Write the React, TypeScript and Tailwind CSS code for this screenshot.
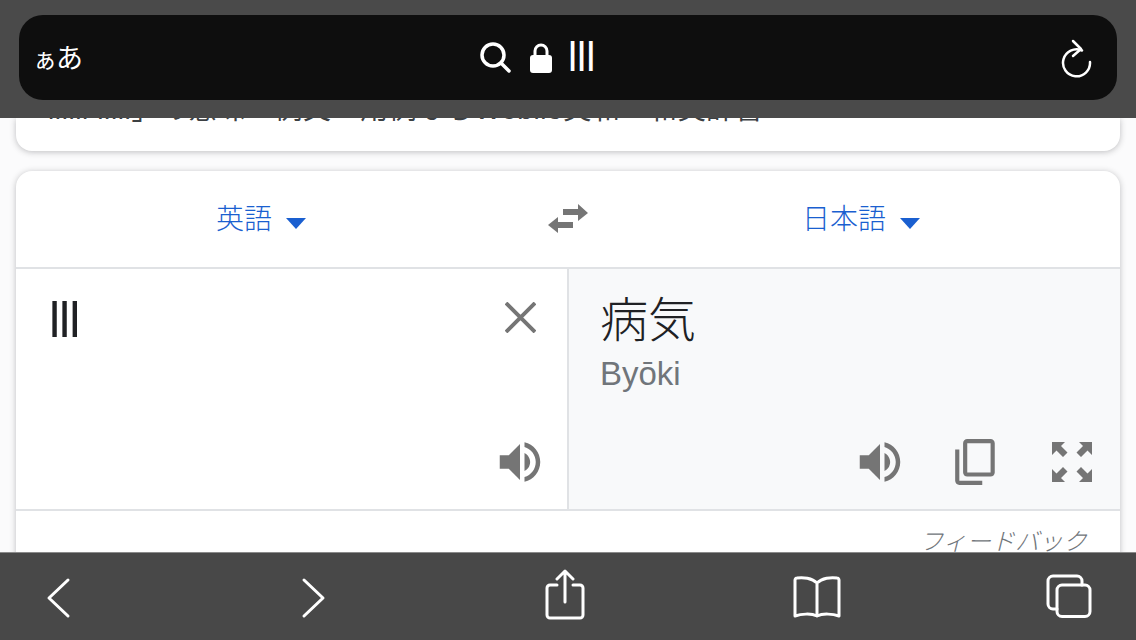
const JP = "font-['Liberation_Sans','Noto_Sans_CJK_JP',sans-serif]";

function Speaker() {
  return (
    <svg viewBox="0 0 24 24" className="h-[54px] w-[54px] fill-[#757575]">
      <path d="M3 9v6h4l5 5V4L7 9H3zm13.5 3c0-1.77-1.02-3.29-2.5-4.03v8.05c1.48-.73 2.5-2.25 2.5-4.02zM14 3.23v2.06c2.89.86 5 3.54 5 6.71s-2.11 5.85-5 6.71v2.06c4.01-.91 7-4.49 7-8.77s-2.99-7.86-7-8.77z" />
    </svg>
  );
}

function Caret() {
  return <span className="ml-[14px] mt-[6px] h-0 w-0 border-x-[10px] border-t-[11px] border-x-transparent border-t-[#1a5fd0]" />;
}

export default function App() {
  return (
    <div className={`flex h-[640px] w-[1136px] flex-col overflow-hidden bg-[#fbfbfc] ${JP}`}>
      {/* Safari top bar */}
      <div className="z-10 h-[118px] shrink-0 bg-[#4a4a4a] px-[19px] pt-[15px]">
        <div className="flex h-[85px] w-[1098px] items-center rounded-[24px] bg-[#0e0e0e] pl-[18px] pr-[25px] text-white">
          <span className="-ml-[3px] mt-[3px] w-[47px] whitespace-nowrap text-[27px] leading-none">
            <span className="-ml-[1px] -mr-[1px] text-[24px]">ぁ</span>あ
          </span>
          <svg viewBox="0 0 32 32" className="ml-[398px] h-8 w-8 fill-none stroke-white stroke-[3.5]">
            <circle cx="14" cy="13" r="11" />
            <path d="M22 21l8 8" strokeLinecap="round" />
          </svg>
          <svg viewBox="0 0 22 32" className="ml-[19px] h-8 w-[22px]">
            <path d="M5 15V9a6 6 0 0 1 12 0v6" className="fill-none stroke-white stroke-[3]" />
            <rect x="0" y="13" width="22" height="18" rx="3" className="fill-white" />
          </svg>
          <span className="ml-[16px] text-[41px] leading-none">lll</span>
          <svg viewBox="0 0 32 40" className="ml-auto h-10 w-8 fill-none stroke-white stroke-[2.5]">
            <path d="M22 12.5A13.5 13.5 0 1 0 30 24" strokeLinecap="round" />
            <path d="M13 3l8 8-8 7" strokeLinecap="round" strokeLinejoin="round" />
          </svg>
        </div>
      </div>

      <div className="min-h-0 flex-1 overflow-hidden">
        {/* Previous result card, scrolled under the bar */}
        <div className="mx-4 h-[33px] overflow-hidden rounded-b-2xl bg-white shadow-[0_1px_6px_rgba(32,33,36,0.28)]">
          <p className="-mt-[26px] whitespace-nowrap pl-[32px] text-[28px] leading-[36px] tracking-[0.6px] text-[#3c4043]">
            llllll lllll」の意味・例文・用例ならWeblio英和・和英辞書
          </p>
        </div>

        {/* Translate card */}
        <div className="mx-4 mt-5 rounded-2xl bg-white pb-[40px] shadow-[0_1px_6px_rgba(32,33,36,0.28)]">
          <div className="grid h-[98px] grid-cols-[490px_124px_1fr] items-center border-b-2 border-[#e0e2e5]">
            <div className="flex items-center justify-center pt-[2px] text-[28px] font-light text-[#1a5fd0]">
              英語
              <Caret />
            </div>
            <div className="flex justify-center">
              <svg viewBox="0 0 40 32" className="h-8 w-10 fill-[#757575]">
                <path d="M0 22l10-8v5h15v6H10v5zM40 10L30 1v5H15v6h15v6z" />
              </svg>
            </div>
            <div className="flex items-center justify-center pr-[28px] pt-[2px] text-[28px] font-light text-[#1a5fd0]">
              日本語
              <Caret />
            </div>
          </div>

          <div className="flex h-[242px] border-b-2 border-[#e0e2e5]">
            <div className="flex w-[553px] flex-col justify-between border-r-2 border-[#e0e2e5] pb-[20px] pl-[33px] pr-[20px] pt-[20px]">
              <div className="flex items-start justify-between">
                <span className="mt-[1px] text-[50px] leading-[60px] tracking-[-1px] text-[#202124]">lll</span>
                <svg viewBox="0 0 32 32" className="mr-[11px] mt-[13px] h-[31px] w-[31px] fill-none stroke-[#757575] stroke-[4]">
                  <path d="M1 1l30 30M31 1L1 31" />
                </svg>
              </div>
              <div className="flex justify-end">
                <Speaker />
              </div>
            </div>
            <div className="flex flex-1 flex-col justify-between bg-[#f8f9fa] pb-[20px] pl-[31px] pr-[28px] pt-[22px]">
              <div>
                <p className="text-[48px] font-light leading-[60px] text-[#202124]">病気</p>
                <p className="mt-[5px] text-[33px] leading-[36px] text-[#70757a]">Byōki</p>
              </div>
              <div className="flex items-center justify-end">
                <Speaker />
                <svg viewBox="0 0 24 24" className="ml-[44px] h-[50px] w-[50px] fill-[#757575]">
                  <path d="M16 1h-8.2c-1.1 0-2 .9-2 2v14c0 1.1.9 2 2 2H19c1.1 0 2-.9 2-2V3c0-1.1-.9-2-2-2zm3 16H7.8V3H19zM4 6H2v15c0 1.1.9 2 2 2h11v-2H4z" />
                </svg>
                <svg viewBox="0 0 40 40" className="ml-[51px] h-10 w-10 fill-[#757575]">
                  <path d="M0 0h13l-4 4 6.500 6.500-4.500 4.500L4.500 8.500 0 13zM40 0v13l-4.500-4.500L29 15l-4.500-4.500L31 4l-4-4zM0 40V27l4.500 4.500L11 25l4.500 4.500L9 36l4 4zM40 40H27l4-4-6.500-6.500L29 25l6.500 6.500L40 27z" />
                </svg>
              </div>
            </div>
          </div>

          <p className="pr-[33px] pt-[14px] text-right text-[24px] font-light italic leading-[34px] text-[#70757a]">フィードバック</p>
        </div>
      </div>

      {/* Safari bottom toolbar */}
      <div className="flex h-[88px] shrink-0 items-center justify-between border-t border-[#8a8a8a] bg-[#484848] pl-[34px] pr-[43px] pt-[2px]">
        <svg viewBox="0 0 48 48" className="h-12 w-12 fill-none stroke-white stroke-[3]">
          <path d="M34 6L15 24l19 18" strokeLinecap="round" strokeLinejoin="round" />
        </svg>
        <svg viewBox="0 0 48 48" className="h-12 w-12 fill-none stroke-white stroke-[3]">
          <path d="M18 6l19 18-19 18" strokeLinecap="round" strokeLinejoin="round" />
        </svg>
        <svg viewBox="0 0 48 52" className="-mt-[6px] ml-[2px] h-[52px] w-12 fill-none stroke-white stroke-[3]">
          <path d="M16 16h-7a3 3 0 0 0-3 3v27a3 3 0 0 0 3 3h30a3 3 0 0 0 3-3V19a3 3 0 0 0-3-3h-7" strokeLinecap="round" />
          <path d="M24 33V3M16 10l8-8 8 8" strokeLinecap="round" strokeLinejoin="round" />
        </svg>
        <svg viewBox="0 0 48 48" className="h-12 w-12 fill-none stroke-white stroke-[3]">
          <path d="M24 9c-5-5-14-6-20-5-1 0-2 1-2 2v36c6-2 16-3 22 0 6-3 16-2 22 0V6c0-1-1-2-2-2-6-1-15 0-20 5zM24 9v33" strokeLinecap="round" strokeLinejoin="round" />
        </svg>
        <svg viewBox="0 0 48 48" className="h-12 w-12 fill-none stroke-white stroke-[3]">
          <path d="M12 35H8a5 5 0 0 1-5-5V7a5 5 0 0 1 5-5h24a5 5 0 0 1 5 5v4" strokeLinecap="round" />
          <rect x="12" y="11" width="33" height="31.500" rx="5" />
        </svg>
      </div>
    </div>
  );
}
